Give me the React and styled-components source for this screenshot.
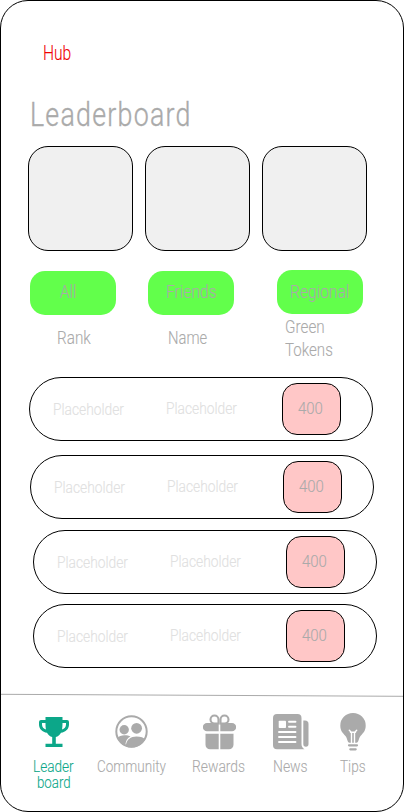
import React from 'react';
import styled, { createGlobalStyle } from 'styled-components';

const GlobalStyle = createGlobalStyle`
  * { box-sizing: border-box; }
  body { margin: 0; background: #fff; font-family: Roboto, "Liberation Sans", sans-serif; font-weight: 300; color: #aaa; }
`;

const Screen = styled.main`
  width: 404px;
  height: 812px;
  border: 1px solid #000;
  border-radius: 28px;
  overflow: hidden;
  display: flex;
  flex-direction: column;
`;

/* Condensed text: each label is squeezed horizontally from its left edge. */
const Text = styled.span`
  display: block;
  white-space: nowrap;
  width: 0;
  font-size: ${(p) => p.$size || 18}px;
  line-height: ${(p) => p.$line || 22}px;
  letter-spacing: ${(p) => p.$spacing || 0}px;
  -webkit-text-stroke: ${(p) => p.$weight || 0.1}px currentColor;
  transform: scaleX(${(p) => p.$scale || 0.85});
  transform-origin: 0 50%;
`;

const HubLink = styled.div`
  margin: 40px 0 0 42px;
  height: 24px;
  color: #f00000;
`;

const Title = styled.h1`
  margin: 27px 0 0 29px;
  height: 44px;
  font-weight: 300;
`;

const Cards = styled.section`
  display: flex;
  gap: 12px;
  margin: 10px 0 0 27px;
`;

const Card = styled.div`
  width: 105px;
  height: 105px;
  border: 1px solid #000;
  border-radius: 20px;
  background: #f0f0f0;
`;

const Filters = styled.div`
  display: grid;
  grid-template-columns: 118px 129px 86px;
  margin: 19px 0 0 29px;
  height: 45px;
`;

const Filter = styled.button`
  display: flex;
  align-items: flex-start;
  width: 86px;
  height: 44px;
  border: 0;
  border-radius: 15px;
  background: #62ff4b;
  color: #aaa;
  font: inherit;
  text-align: left;
  margin-top: ${(p) => p.$top}px;
  padding: ${(p) => 11 - p.$top}px 0 0 ${(p) => p.$inset}px;
`;

const Headings = styled.div`
  display: grid;
  grid-template-columns: 111px 117px 100px;
  align-items: center;
  height: 46px;
  margin: 0 0 0 56px;
`;

const Rows = styled.section`
  margin-top: 16px;
`;

const Row = styled.div`
  display: grid;
  grid-template-columns: 113px 116px 59px;
  align-items: center;
  width: 344px;
  height: 64px;
  border: 1px solid #000;
  border-radius: 32px;
  padding-left: 23px;
  margin: 0 0 ${(p) => p.$gap}px ${(p) => p.$left}px;
  color: #e0e0e0;
`;

const Raised = styled.div`
  margin-top: -2px;
`;

const Tokens = styled.div`
  width: 59px;
  height: 52px;
  border: 1px solid #000;
  border-radius: 15px;
  background: #ffc7c7;
  color: #aaa;
  padding: 13px 0 0 15px;
`;

const Divider = styled.svg`
  display: block;
  width: 402px;
  height: 4px;
  margin-top: 25px;
`;

const Nav = styled.nav`
  display: grid;
  grid-template-columns: 64px 95px 81px 67px 60px;
  margin: 16px 0 0 32px;
`;

const NavItem = styled.a`
  color: ${(p) => (p.$active ? '#0ca789' : '#aaa')};
`;

const IconBox = styled.div`
  height: 46px;
  display: flex;
  align-items: flex-start;
  padding-left: ${(p) => p.$left || 0}px;
  padding-top: ${(p) => p.$top || 0}px;
  svg { display: block; flex: none; }
`;

const Indented = styled.div`
  padding-left: 4px;
`;

const Trophy = () => (
  <svg width="30" height="30" viewBox="0 0 30 30">
    <path
      fill="currentColor"
      fillRule="evenodd"
      d="M6.5 0h17v3H28a2 2 0 0 1 2 2v2.5c0 4.4-3.4 7.7-8 8.2-1.2 2.2-3 3.7-5.2 4.3v6.7h6.7V30h-17v-3.3h6.7V20c-2.2-.6-4-2.1-5.2-4.3-4.6-.5-8-3.8-8-8.2V5a2 2 0 0 1 2-2h4.5zM3 6v1.5c0 2.5 1.6 4.3 4 5-.4-1.7-.5-4-.5-6.500zM23.500 6c0 2.500-.1 4.800-.5 6.500 2.400-.7 4-2.500 4-5V6z"
    />
  </svg>
);

const Community = () => (
  <svg width="33" height="33" viewBox="0 0 33 33">
    <clipPath id="community-clip"><circle cx="16.500" cy="16.500" r="16" /></clipPath>
    <g clipPath="url(#community-clip)" fill="currentColor">
      <path d="M2 23.500c2-2.600 4.500-3.200 7.500-3.200 2.500 0 4.500.4 6 1.200-3 1.600-4.600 3.600-5 7.500L8 31z" />
      <path d="M11 33v-3.500c.8-4.800 4.500-8 10.500-8 4 0 7.500 1 9.500 3.500L25 33H11z" />
      <circle cx="9.200" cy="14.800" r="4.700" />
      <circle cx="21.600" cy="13.300" r="5.400" />
    </g>
    <circle cx="16.500" cy="16.500" r="15.200" fill="none" stroke="currentColor" strokeWidth="2" />
  </svg>
);

const Gift = () => (
  <svg width="33" height="36" viewBox="0 0 33 36">
    <g fill="none" stroke="currentColor" strokeWidth="2.100">
      <path d="M15.500 9.500h-4a4 4 0 1 1 4-4z" />
      <path d="M17.500 9.500h4a4 4 0 1 0-4-4z" />
    </g>
    <g fill="currentColor">
      <path d="M15.700 9H4a4 4 0 0 0 0 8.300h11.700zM17.300 9H29a4 4 0 0 1 0 8.300H17.300z" />
      <path d="M2.500 19.800h13.200v15.500H7a4.500 4.500 0 0 1-4.500-4.500zM17.300 19.800h13.200v11a4.500 4.500 0 0 1-4.500 4.500h-8.700z" />
    </g>
  </svg>
);

const News = () => (
  <svg width="36" height="36" viewBox="0 0 36 36">
    <path fill="currentColor" d="M4 0h20.500a4 4 0 0 1 4 4v26c0 2.300 1 4.200 3 5.300H4a4 4 0 0 1-4-4V4a4 4 0 0 1 4-4z" />
    <path fill="currentColor" d="M30.300 6.600h1.700a3.500 3.500 0 0 1 3.500 3.500v20a2.600 2.600 0 0 1-5.200 0z" />
    <rect x="5.700" y="6.700" width="7.300" height="7.300" rx=".8" fill="#fff" />
    <path d="M16 7.700h6.500M16 12.700h6.500M6 18h16.500M6 23h16.500M6 28h16.500" stroke="#fff" strokeWidth="1.900" strokeLinecap="round" />
  </svg>
);

const Bulb = () => (
  <svg width="26" height="38" viewBox="0 0 26 38">
    <path fill="currentColor" d="M13 0a12.600 12.600 0 0 0-12.700 12.500c0 5.500 2.500 7.500 5.200 10.500 2 2.300 1.800 6.800 4 6.800h7c2.200 0 2-4.500 4-6.800 2.700-3 5.200-5 5.200-10.500A12.600 12.600 0 0 0 13 0z" />
    <path d="M9.300 17.200l2.200 2.300v10.300M16.700 17.200l-2.200 2.300v10.300M10.500 19.200h5" fill="none" stroke="#fff" strokeWidth="1.400" strokeLinecap="round" />
    <path d="M9 32.300h8M10.300 36.300h5.400" stroke="currentColor" strokeWidth="2.200" strokeLinecap="round" />
  </svg>
);

const rows = [
  { left: 28, gap: 14 },
  { left: 29, gap: 11 },
  { left: 32, gap: 10 },
  { left: 32, gap: 0 },
];

export default function App() {
  return (
    <>
      <GlobalStyle />
      <Screen>
        <HubLink><Text $size={20} $line={24} $scale={0.78}>Hub</Text></HubLink>
        <Title><Text $size={34} $line={44} $spacing={1.6} $scale={0.787} $weight={0.4}>Leaderboard</Text></Title>
        <Cards><Card /><Card /><Card /></Cards>
        <Filters>
          <Filter $top={1} $inset={30}><Text>All</Text></Filter>
          <Filter $top={1} $inset={18}><Text $scale={0.87}>Friends</Text></Filter>
          <Filter $top={0} $inset={13}><Text $scale={0.87}>Regional</Text></Filter>
        </Filters>
        <Headings>
          <Text>Rank</Text>
          <Text $scale={0.82}>Name</Text>
          <div><Text $line={23}>Green</Text><Text $line={23} $scale={0.84}>Tokens</Text></div>
        </Headings>
        <Rows>
          {rows.map((row, i) => (
            <Row key={i} $left={row.left} $gap={row.gap}>
              <Text $size={17} $scale={0.81}>Placeholder</Text>
              <Raised><Text $size={17} $scale={0.81}>Placeholder</Text></Raised>
              <Tokens><Text $size={17} $scale={0.88}>400</Text></Tokens>
            </Row>
          ))}
        </Rows>
        <Divider viewBox="0 0 402 4"><path d="M0 1.300L402 3.300" stroke="#aaa" strokeWidth="1" /></Divider>
        <Nav>
          <NavItem $active>
            <IconBox $left={6} $top={4}><Trophy /></IconBox>
            <Text $size={16} $line={16}>Leader</Text>
            <Indented><Text $size={16} $line={16} $scale={0.83}>board</Text></Indented>
          </NavItem>
          <NavItem>
            <IconBox $left={18} $top={2}><Community /></IconBox>
            <Text $size={16} $line={16} $scale={0.845}>Community</Text>
          </NavItem>
          <NavItem>
            <IconBox $left={11} $top={1}><Gift /></IconBox>
            <Text $size={16} $line={16} $scale={0.865}>Rewards</Text>
          </NavItem>
          <NavItem>
            <IconBox $top={1}><News /></IconBox>
            <Text $size={16} $line={16} $scale={0.87}>News</Text>
          </NavItem>
          <NavItem>
            <IconBox><Bulb /></IconBox>
            <Text $size={16} $line={16}>Tips</Text>
          </NavItem>
        </Nav>
      </Screen>
    </>
  );
}
